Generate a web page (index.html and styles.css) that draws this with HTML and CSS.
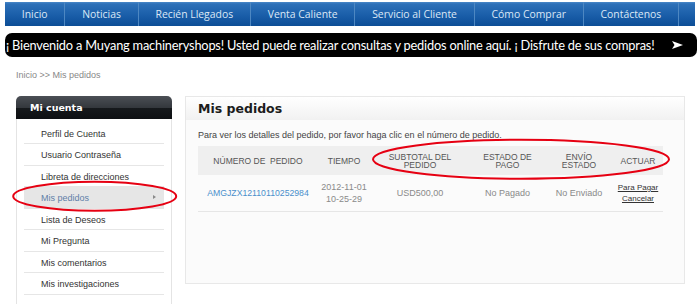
FILE: index.html
```html
<!DOCTYPE html>
<html lang="es">
<head>
  <meta charset="UTF-8">
  <title>Mis pedidos</title>
  <link rel="stylesheet" href="styles.css">
</head>
<body>
  <div class="page">
    <ul class="nav">
      <li><a href="#">Inicio</a></li>
      <li><a href="#">Noticias</a></li>
      <li><a href="#">Recién Llegados</a></li>
      <li><a href="#">Venta Caliente</a></li>
      <li><a href="#">Servicio al Cliente</a></li>
      <li><a href="#">Cómo Comprar</a></li>
      <li><a href="#">Contáctenos</a></li>
      <li class="nav-end"></li>
    </ul>

    <div class="welcome">
      <span>¡ Bienvenido a Muyang machineryshops! Usted puede realizar consultas y pedidos online aquí. ¡ Disfrute de sus compras!</span>
      <svg class="welcome-arrow" width="11" height="8" viewBox="0 0 11 8">
        <path d="M0 0 L11 4 L0 8 L2.5 4 Z" fill="#fff"/>
      </svg>
    </div>

    <div class="crumbs">Inicio &gt;&gt; Mis pedidos</div>

    <div class="layout">
      <aside class="account">
        <h3 class="account-title">Mi cuenta</h3>
        <ul class="account-menu">
          <li><a href="#">Perfil de Cuenta</a></li>
          <li><a href="#">Usuario Contraseña</a></li>
          <li><a href="#">Libreta de direcciones</a></li>
          <li class="active"><a href="#">Mis pedidos</a></li>
          <li><a href="#">Lista de Deseos</a></li>
          <li><a href="#">Mi Pregunta</a></li>
          <li><a href="#">Mis comentarios</a></li>
          <li><a href="#">Mis investigaciones</a></li>
        </ul>
      </aside>

      <section class="panel">
        <h2 class="panel-title">Mis pedidos</h2>
        <div class="panel-body">
          <p class="hint">Para ver los detalles del pedido, por favor haga clic en el número de pedido.</p>
          <table class="orders">
            <colgroup>
              <col class="c-num">
              <col class="c-time">
              <col class="c-total">
              <col class="c-pay">
              <col class="c-ship">
              <col class="c-act">
            </colgroup>
            <thead>
              <tr>
                <th>NÚMERO DE&nbsp; PEDIDO</th>
                <th>TIEMPO</th>
                <th>SUBTOTAL DEL PEDIDO</th>
                <th>ESTADO DE PAGO</th>
                <th>ENVÍO ESTADO</th>
                <th>ACTUAR</th>
              </tr>
            </thead>
            <tbody>
              <tr>
                <td><a class="order-link" href="#">AMGJZX12110110252984</a></td>
                <td>2012-11-01<br>10-25-29</td>
                <td>USD500,00</td>
                <td>No Pagado</td>
                <td>No Enviado</td>
                <td class="actions"><a href="#">Para Pagar</a><br><a href="#">Cancelar</a></td>
              </tr>
            </tbody>
          </table>
        </div>
      </section>
    </div>
  </div>

  <!-- red annotation marks -->
  <svg class="marks" width="700" height="304" viewBox="0 0 700 304">
    <ellipse cx="94.7" cy="196.2" rx="81.5" ry="14.5" fill="none" stroke="#e60012" stroke-width="2"/>
    <ellipse cx="521" cy="159.2" rx="148" ry="19.5" fill="none" stroke="#e60012" stroke-width="2"/>
  </svg>
</body>
</html>
```

FILE: styles.css
```css
* {
  box-sizing: border-box;
}

body {
  margin: 0;
  background-color: #ffffff;
  font-family: "Liberation Sans", Arial, sans-serif;
  overflow: hidden;
}

.page {
  padding: 2px 5px 0;
}

/* top navigation */
.nav {
  display: flex;
  height: 24px;
  margin: 0;
  padding: 0;
  list-style: none;
  background: linear-gradient(#4a88c8 0, #2d70b8 2px, #1a5ea9 55%, #0c4d96 100%);
}

.nav a {
  display: block;
  padding: 0 16.8px;
  line-height: 24px;
  border-right: 1px solid #4d87c2;
  color: #dce8f6;
  font-family: "Open Sans", sans-serif;
  font-size: 10.4px;
  text-decoration: none;
}

.nav-end {
  flex: 1;
}

/* welcome banner */
.welcome {
  display: flex;
  align-items: center;
  justify-content: space-between;
  height: 24px;
  margin-top: 7px;
  margin-right: -2px;
  padding: 0 14px 0 1px;
  background-color: #000;
  border-radius: 7px;
  color: #fff;
  font-family: Lato, sans-serif;
  font-size: 12.8px;
  letter-spacing: -0.2px;
  white-space: nowrap;
}

.crumbs {
  margin: 12px 0 0 11px;
  line-height: 12px;
  font-size: 9px;
  color: #888;
}

.layout {
  display: flex;
  align-items: flex-start;
  gap: 13px;
  margin-top: 15px;
  padding: 0 10px 0 11px;
}

/* account sidebar */
.account {
  flex: none;
  width: 156px;
}

.account-title {
  margin: 0;
  height: 23px;
  padding-left: 14px;
  line-height: 23px;
  border-radius: 5px 5px 0 0;
  background: linear-gradient(#4b4f55 0, #34383d 50%, #16191c 52%, #0e1013 100%);
  color: #fff;
  font-family: "DejaVu Sans", sans-serif;
  font-size: 9.5px;
  font-weight: bold;
}

.account-menu {
  margin: 0;
  padding: 3.5px 7px 40px;
  list-style: none;
  background-color: #fff;
  border: 1px solid #e4e4e4;
  border-top: none;
}

.account-menu a {
  display: block;
  position: relative;
  height: 21.5px;
  padding-left: 17px;
  line-height: 22px;
  border-bottom: 1px solid #e6e6e6;
  color: #333;
  font-size: 9px;
  text-decoration: none;
}

.account-menu .active a {
  background-color: #e6e6e6;
  color: #5f80a8;
}

.account-menu .active a::after {
  content: "";
  position: absolute;
  right: 8px;
  top: 8px;
  border-left: 3px solid #8a8a8a;
  border-top: 2.5px solid transparent;
  border-bottom: 2.5px solid transparent;
}

/* orders panel */
.panel {
  width: 500px;
  height: 188px;
  background-color: #fbfbfb;
  border: 1px solid #e8e8e8;
}

.panel-title {
  margin: 0;
  height: 23px;
  padding-left: 12px;
  line-height: 23px;
  background: linear-gradient(#ffffff, #f1f1f1);
  color: #1c1c1c;
  font-family: "DejaVu Sans", sans-serif;
  font-size: 12.5px;
  font-weight: bold;
}

.panel-body {
  padding: 0 21px 0 12px;
}

.hint {
  margin: 9px 0 0;
  line-height: 12px;
  font-size: 9px;
  color: #444;
}

.orders {
  width: 465px;
  margin-top: 5px;
  border-collapse: collapse;
  table-layout: fixed;
}

.c-num { width: 120px; }
.c-time { width: 52px; }
.c-total { width: 100px; }
.c-pay { width: 75px; }
.c-ship { width: 68px; }
.c-act { width: 50px; }

.orders th {
  height: 29px;
  padding: 0 6px;
  background-color: #efefef;
  color: #555;
  font-size: 8.5px;
  font-weight: normal;
  line-height: 8px;
  text-align: center;
}

.orders td {
  height: 36px;
  padding: 0;
  border-bottom: 1px solid #e6e6e6;
  color: #8a8a8a;
  font-size: 9px;
  line-height: 12px;
  text-align: center;
  vertical-align: middle;
}

.order-link {
  color: #4a8fcb;
  font-size: 8.7px;
  text-decoration: none;
}

.orders .actions {
  line-height: 10px;
}

.actions a {
  color: #333;
  font-size: 8px;
  text-decoration: underline;
}

.marks {
  position: absolute;
  top: 0;
  left: 0;
  pointer-events: none;
}
```
